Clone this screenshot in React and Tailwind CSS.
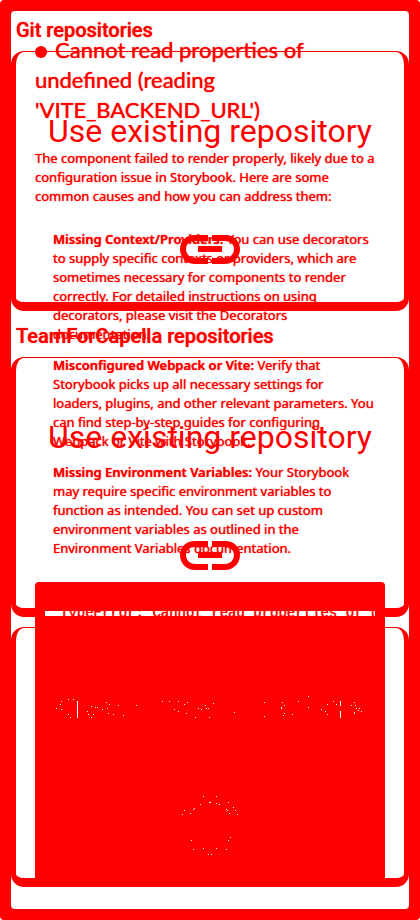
import { CirclePlus } from "lucide-react";

const specks = [
  [56, 708], [60, 704], [61, 701], [61, 709], [68, 699], [73, 699], [68, 714], [70, 717],
  [87, 711], [88, 714], [91, 706], [91, 717], [93, 714], [95, 707], [97, 707], [102, 709],
  [106, 702], [107, 708], [109, 704], [108, 713], [113, 714], [118, 705], [123, 715],
  [136, 705], [162, 701], [169, 701], [178, 701], [184, 704], [187, 702], [174, 709],
  [178, 711], [186, 713], [195, 717], [198, 708], [201, 709], [205, 705], [206, 708],
  [208, 708], [209, 717], [213, 703], [234, 712], [264, 702], [264, 716], [282, 702],
  [284, 705], [281, 707], [281, 708], [284, 713], [283, 715], [292, 714], [298, 701],
  [308, 696], [308, 707], [321, 709], [325, 711], [327, 704], [327, 714], [333, 701],
  [336, 704], [351, 705], [354, 702], [355, 705], [356, 708], [358, 710], [359, 708],
  [361, 711], [354, 712], [354, 713],
  [203, 796], [216, 796], [209, 802], [210, 802], [200, 804], [216, 803], [219, 804],
  [194, 808], [193, 809], [184, 810], [182, 814], [190, 813], [228, 802], [233, 807],
  [235, 810], [237, 814], [226, 809], [227, 810], [229, 813], [191, 840], [193, 849],
  [203, 848], [208, 854], [211, 854], [216, 848], [226, 849], [228, 840], [230, 837],
];

function LinkIcon() {
  return (
    <svg viewBox="0 0 60 30" className="h-[30px] w-[60px] fill-[#f00]" aria-hidden="true">
      <path d="M28 1H15C6 1 0 7 0 15s6 15 15 15h13v-6H15c-5 0-9-4-9-9s4-8 9-8h13zM32 1h13c9 0 15 6 15 14s-6 15-15 15H32v-6h13c5 0 9-4 9-9s-4-8-9-8H32zM18 12h24v6H18z" />
    </svg>
  );
}

function Card({ title, children }) {
  return (
    <button type="button" className="flex h-[260px] w-full flex-col items-center rounded-[13px] border-x-[5px] border-t border-b-[9px] border-[#f00] pt-[59px]">
      <span className="text-[32px] leading-10 whitespace-nowrap">{title}</span>
      <span className="mt-[83px]">{children}</span>
    </button>
  );
}

export default function App() {
  return (
    <div className="relative bg-white font-['Roboto',sans-serif] text-[#f00] text-shadow-[0_0_1px_#f00]">
      <main className="min-h-[920px] rounded-sm border-[11px] border-[#f00] bg-[#f00]">
        <div className="rounded bg-white pb-[22px]">
          <h2 className="h-10 px-[5px] pt-[7px] text-xl leading-6 font-medium">Git repositories</h2>
          <Card title="Use existing repository"><LinkIcon /></Card>
          <h2 className="h-[46px] px-[5px] pt-[13px] text-xl leading-6 font-medium">TeamForCapella repositories</h2>
          <Card title="Use existing repository"><LinkIcon /></Card>
          <div className="mt-[10px]">
            <Card title="Create new repository"><CirclePlus size={60} /></Card>
          </div>
        </div>
      </main>
      <section className="absolute inset-x-0 top-[35px] px-[35px] font-['Noto_Sans',sans-serif] text-[13px] leading-[19px] whitespace-nowrap">
        <h1 className="font-['Lato',sans-serif] text-[22px] leading-[30px]">
          <span className="mr-2 inline-block size-3 rounded-full bg-[#f00]" />
          Cannot read properties of<br />undefined (reading<br />'VITE_BACKEND_URL')
        </h1>
        <p className="mt-6">
          The component failed to render properly, likely due to a<br />configuration issue in Storybook. Here are some<br />common causes and how you can address them:
        </p>
        <ul className="mt-6 flex flex-col gap-3 pl-[18px]">
          <li><b className="font-semibold">Missing Context/Providers:</b> You can use decorators<br />to supply specific contexts or providers, which are<br />sometimes necessary for components to render<br />correctly. For detailed instructions on using<br />decorators, please visit the Decorators<br />documentation.</li>
          <li><b className="font-semibold">Misconfigured Webpack or Vite:</b> Verify that<br />Storybook picks up all necessary settings for<br />loaders, plugins, and other relevant parameters. You<br />can find step-by-step guides for configuring<br />Webpack or Vite with Storybook.</li>
          <li><b className="font-semibold">Missing Environment Variables:</b> Your Storybook<br />may require specific environment variables to<br />function as intended. You can set up custom<br />environment variables as outlined in the<br />Environment Variables documentation.</li>
        </ul>
        <div className="mt-6 h-[305px] rounded-t-sm bg-[#f00] px-[10px] pt-[29px]">
          <pre className="h-[5px] overflow-hidden bg-white pl-[15px] font-['Liberation_Mono',monospace] text-sm leading-[5px]">TypeError: Cannot read properties of undefined</pre>
        </div>
      </section>
      <svg viewBox="55 695 310 160" className="absolute top-[695px] left-[55px] h-[160px] w-[310px] fill-white" shapeRendering="crispEdges" aria-hidden="true">
        {specks.map(([x, y]) => (
          <rect key={`${x}-${y}`} x={x} y={y} width="1" height="1" />
        ))}
        <path d="M77 701h1v17h-1zM340 701h1v5h-1zM340 711h1v7h-1z" />
      </svg>
    </div>
  );
}
